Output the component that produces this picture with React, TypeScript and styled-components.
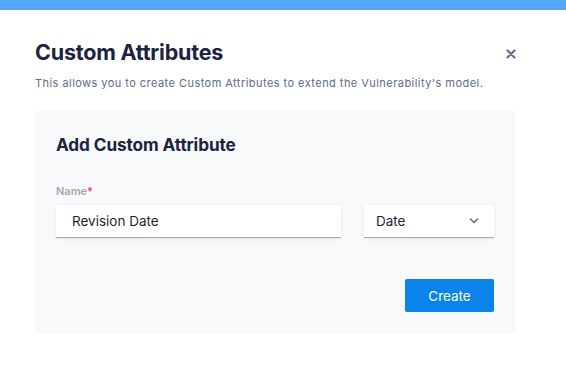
import React from "react";
import styled, { createGlobalStyle } from "styled-components";

const GlobalStyle = createGlobalStyle`
  html, body {
    margin: 0;
    padding: 0;
    background: #ffffff;
  }
  body {
    font-family: Inter, "Liberation Sans", sans-serif;
  }
`;

export default function App() {
  return (
    <>
      <GlobalStyle />
      <Page>
        <TopBar />
        <Modal>
          <Header>
            <div>
              <Title>Custom Attributes</Title>
              <Subtitle>This allows you to create Custom Attributes to extend the Vulnerability's model.</Subtitle>
            </div>
            <CloseButton aria-label="Close">
              <svg width="10" height="10" viewBox="0 0 10 10">
                <path d="M1.5 1.5 L8.5 8.5 M8.5 1.5 L1.5 8.5" stroke="#5f6f88" strokeWidth="2.2" strokeLinecap="round" />
              </svg>
            </CloseButton>
          </Header>
          <Panel>
            <PanelTitle>Add Custom Attribute</PanelTitle>
            <Label>
              Name<Required>*</Required>
            </Label>
            <FieldRow>
              <TextInput defaultValue="Revision Date" />
              <Select>
                <span>Date</span>
                <svg width="10" height="6" viewBox="0 0 10 6">
                  <path d="M1.5 1 L5 4.5 L8.5 1" fill="none" stroke="#5f6f88" strokeWidth="1.6" strokeLinecap="round" strokeLinejoin="round" />
                </svg>
              </Select>
            </FieldRow>
            <Actions>
              <PrimaryButton>Create</PrimaryButton>
            </Actions>
          </Panel>
        </Modal>
      </Page>
    </>
  );
}

const Page = styled.div`
  width: 566px;
  height: 365px;
  background: #ffffff;
  overflow: hidden;
`;

const TopBar = styled.div`
  height: 10px;
  background: #55a7fc;
`;

const Modal = styled.div`
  padding: 28px 35px 0 35px;
  width: 480px;
`;

const Header = styled.div`
  display: flex;
  justify-content: space-between;
  align-items: flex-start;
`;

const Title = styled.h1`
  margin: 0;
  font-size: 21.5px;
  line-height: 28px;
  font-weight: 700;
  color: #1c2340;
  letter-spacing: -0.2px;
`;

const Subtitle = styled.p`
  margin: 9px 0 0 0;
  font-size: 11px;
  line-height: 16px;
  letter-spacing: 0.45px;
  color: #5d6b86;
  white-space: nowrap;
`;

const CloseButton = styled.button`
  margin: 10px -2px 0 0;
  padding: 0;
  border: none;
  background: none;
  width: 12px;
  height: 12px;
  display: flex;
  align-items: center;
  justify-content: center;
  cursor: pointer;
`;

const Panel = styled.div`
  margin-top: 20px;
  background: #f8f9fb;
  padding: 22px 21px 21px 21px;
  height: 222px;
  box-sizing: border-box;
`;

const PanelTitle = styled.h2`
  margin: 0;
  font-size: 17.2px;
  line-height: 24px;
  font-weight: 700;
  color: #1c2340;
  letter-spacing: -0.1px;
`;

const Label = styled.div`
  margin-top: 26px;
  font-size: 11px;
  line-height: 16px;
  font-weight: 600;
  color: #a3a7b3;
`;

const Required = styled.span`
  color: #e8466a;
`;

const FieldRow = styled.div`
  margin-top: 6px;
  display: flex;
  gap: 23px;
`;

const TextInput = styled.input`
  width: 285px;
  height: 33px;
  box-sizing: border-box;
  border: none;
  border-bottom: 1px solid #a8a8ac;
  background: #ffffff;
  box-shadow: 0 1px 4px rgba(0, 0, 0, 0.08);
  padding: 0 16px;
  font-family: Inter, "Liberation Sans", sans-serif;
  font-size: 13.5px;
  color: #1f1f24;
  outline: none;
`;

const Select = styled.div`
  width: 130px;
  height: 33px;
  box-sizing: border-box;
  border-bottom: 1px solid #a8a8ac;
  background: #ffffff;
  box-shadow: 0 1px 4px rgba(0, 0, 0, 0.08);
  padding: 0 15px 0 12px;
  display: flex;
  align-items: center;
  justify-content: space-between;
  font-size: 13.5px;
  color: #1c2340;
`;

const Actions = styled.div`
  margin-top: 41px;
  display: flex;
  justify-content: flex-end;
`;

const PrimaryButton = styled.button`
  width: 89px;
  height: 33px;
  border: none;
  border-radius: 2px;
  background: #0a84ea;
  color: #ffffff;
  font-family: Inter, "Liberation Sans", sans-serif;
  font-size: 13.5px;
  cursor: pointer;
`;
